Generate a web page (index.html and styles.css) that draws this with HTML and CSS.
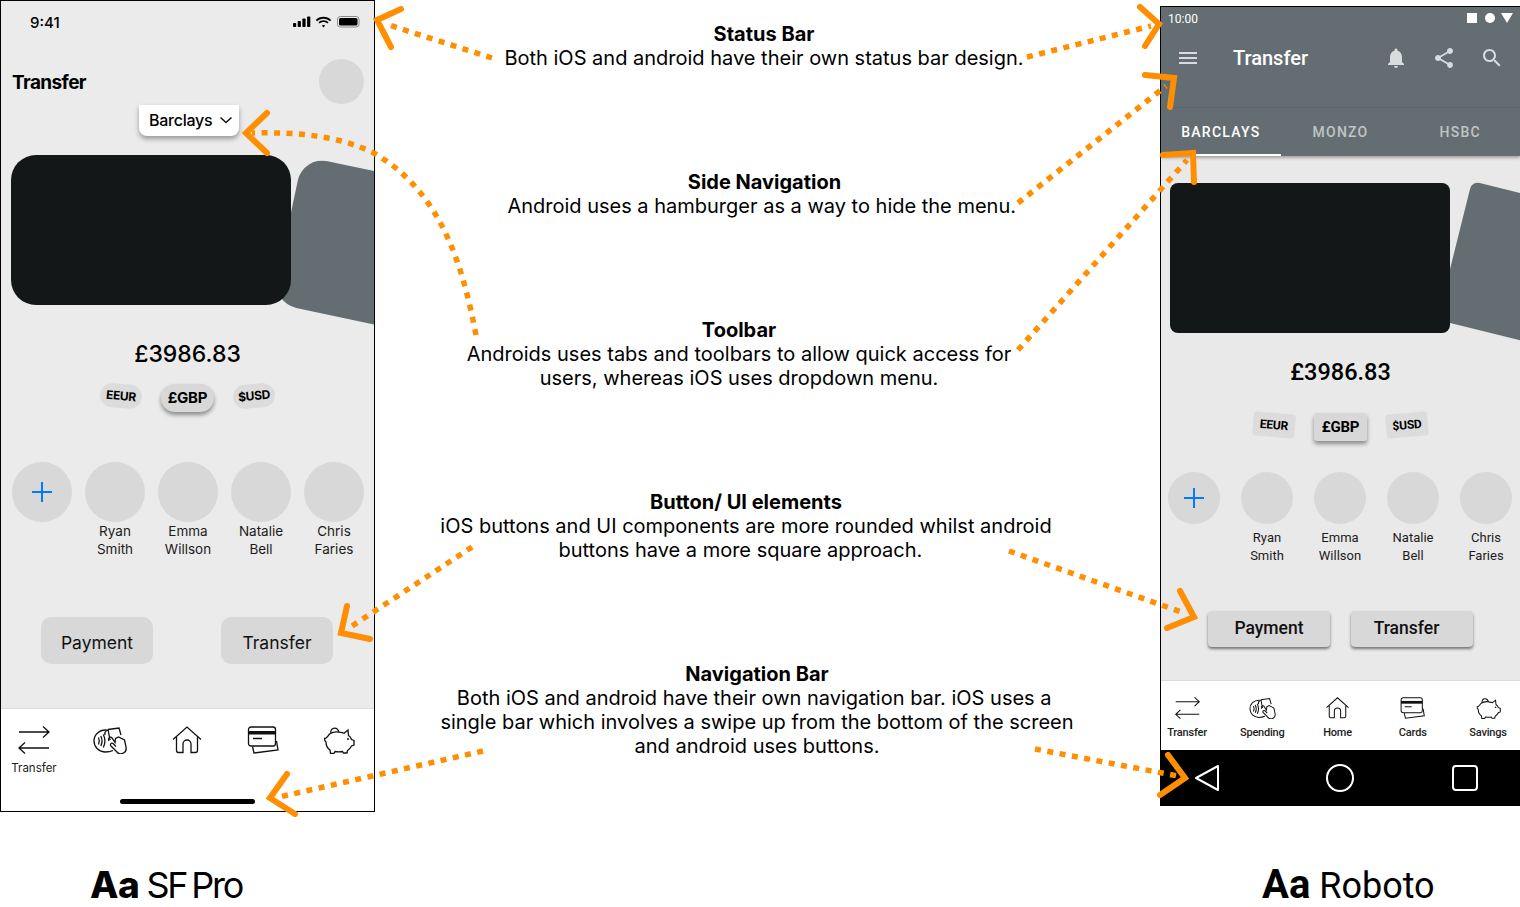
FILE: index.html
```html
<!DOCTYPE html>
<html>
  <head>
    <title>iOS vs Android</title>
    <link rel="stylesheet" href="styles.css">
  </head>
  <body>
    <!-- icons used by both tab bars -->
    <svg class="sprites" width="0" height="0">
      <symbol id="i-transfer" viewBox="0 0 34 28">
        <path d="M2 6H32M26 .5L32 6L26 11.5M32 22H2M8 16.5L2 22L8 27.5"/>
      </symbol>
      <symbol id="i-spending" viewBox="0 0 34 28">
        <path d="M20 24.500C17 25.800 14 26 12.500 26C6 26 1 21 1 15C1 9 6 4 12.500 4C13.500 4 14.500 4 15.500 4.300"/>
        <path d="M5.500 11.500c1 2.200 1 4.800 0 7M7.800 10c1.500 3 1.500 7 0 10M10.300 8.500c2 4 2 9 0 13"/>
        <path d="M15 3.500L26 2L28 9M15 3.500L17 14M13.500 5C12 5.500 11.500 7 12 9"/>
        <path d="M16 15c-1.500-3 1.500-5 3-3l3 4.500l.5-4l3-1.500l6 3l1.500 7c.5 2.500-.5 5-2.500 6c-3 1.500-5 1-6.500-1l-6-6c-1.500-2 .5-3.500 2-2.500l3 3"/>
      </symbol>
      <symbol id="i-home" viewBox="0 0 34 28">
        <path d="M3 13.500L17 1L31 13.500M6.500 11V24.500a2 2 0 0 0 2 2H13V18a4 4 0 0 1 8 0V26.500H25.500a2 2 0 0 0 2-2V11"/>
      </symbol>
      <symbol id="i-cards" viewBox="0 0 34 28">
        <rect x="2.500" y="1" width="27" height="19" rx="2.500"/>
        <path class="fill" d="M2.500 5H29.500V8.500H2.500z"/>
        <path d="M7 12.500H16M6.500 20.500L8 27L32 24L30.500 15"/>
      </symbol>
      <symbol id="i-piggy" viewBox="0 0 34 28">
        <path d="M7.500 8C10 6.500 14 5.500 17 6.200C19.500 6.500 21 7 22 7.200L26 4L26.500 9.500C28 10.500 29 12 29.500 13.500L32 14.500V19L29.500 20C28.500 22 27 23.500 25.500 24.500L25 27H21.500L20.500 25.500C18 26 15.500 26 13 25.500L12 27.500H8.500L8 24C5 22 4 19 4 16C3 15 2.500 14 2.500 12.500C4.500 12.500 6 10 7.500 8"/>
        <path d="M9 7C7.500 2.500 14.500-.5 17 6"/>
        <circle class="fill" cx="26" cy="13" r="1"/>
      </symbol>
    </svg>

    <div class="page">
      <section class="col-ios">
        <div class="phone ios">
          <div class="card-back"></div>
          <div class="ios-status">
            <span class="ios-time">9:41</span>
            <svg class="ios-status-icons" width="67" height="12" viewBox="0 0 67 12">
              <rect x="0" y="7" width="3.200" height="4" rx=".8"/>
              <rect x="4.700" y="5" width="3.200" height="6" rx=".8"/>
              <rect x="9.400" y="2.500" width="3.200" height="8.500" rx=".8"/>
              <rect x="14.100" y="0.500" width="3.200" height="10.500" rx=".8"/>
              <path d="M30.500 2.800c-2.500 0-4.800 1-6.400 2.500l-1.300-1.300c2-2 4.700-3.200 7.700-3.200s5.700 1.200 7.700 3.200l-1.300 1.300c-1.600-1.500-3.900-2.500-6.400-2.500zm0 3.300c-1.500 0-2.800.6-3.800 1.400l-1.300-1.300c1.400-1.200 3.100-2 5.100-2s3.700.8 5.100 2l-1.300 1.300c-1-.8-2.300-1.400-3.800-1.400zm0 2.900c.7 0 1.300.2 1.700.6l-1.700 1.900l-1.700-1.900c.4-.4 1-.6 1.700-.6z"/>
              <rect x="44.500" y=".5" width="21.500" height="10.500" rx="2.800" fill="none" stroke="#8a8a8a"/>
              <rect x="46" y="2" width="18.500" height="7.500" rx="1.500"/>
            </svg>
          </div>
          <div class="ios-header">
            <h2>Transfer</h2>
            <div class="ios-avatar"></div>
          </div>
          <div class="dropdown">
            <span>Barclays</span>
            <svg width="12" height="8" viewBox="0 0 12 8"><path d="M.5 1.500L6 6.500L11.500 1.500"/></svg>
          </div>
          <div class="card"></div>
          <div class="amount">£3986.83</div>
          <div class="chips">
            <span class="chip tilt-right">EEUR</span>
            <span class="chip active">£GBP</span>
            <span class="chip tilt-left">$USD</span>
          </div>
          <div class="people">
            <div class="person"><div class="face"><svg viewBox="0 0 20 20"><path d="M10 0V20M0 10H20"/></svg></div></div>
            <div class="person"><div class="face"></div>Ryan<br>Smith</div>
            <div class="person"><div class="face"></div>Emma<br>Willson</div>
            <div class="person"><div class="face"></div>Natalie<br>Bell</div>
            <div class="person"><div class="face"></div>Chris<br>Faries</div>
          </div>
          <div class="actions">
            <button>Payment</button>
            <button>Transfer</button>
          </div>
          <div class="tabs">
            <div class="tab"><svg class="icon"><use href="#i-transfer"/></svg>Transfer</div>
            <div class="tab"><svg class="icon"><use href="#i-spending"/></svg></div>
            <div class="tab"><svg class="icon"><use href="#i-home"/></svg></div>
            <div class="tab"><svg class="icon"><use href="#i-cards"/></svg></div>
            <div class="tab"><svg class="icon"><use href="#i-piggy"/></svg></div>
            <div class="home-bar"></div>
          </div>
        </div>
        <div class="caption caption-ios"><b>Aa</b> <span>SF Pro</span></div>
      </section>

      <section class="notes">
        <div class="note note-status">
          <b>Status Bar</b><br>
          Both iOS and android have their own status bar design.
        </div>
        <div class="note note-side">
          <b>Side Navigation</b><br>
          Android uses a hamburger as a way to hide the menu.&nbsp;
        </div>
        <div class="note note-toolbar">
          <b>Toolbar</b><br>
          Androids uses tabs and toolbars to allow quick access for<br>
          users, whereas iOS uses dropdown menu.
        </div>
        <div class="note note-button">
          <b>Button/ UI elements</b><br>
          iOS buttons and UI components are more rounded whilst android<br>
          buttons have a more square approach.&nbsp;&nbsp;
        </div>
        <div class="note note-nav">
          <b>Navigation Bar</b><br>
          Both iOS and android have their own navigation bar. iOS uses a&nbsp;<br>
          single bar which involves a swipe up from the bottom of the screen<br>
          and android uses buttons.
        </div>
      </section>

      <section class="col-android">
        <div class="phone android">
          <div class="card-back"></div>
          <div class="appbar">
            <div class="android-status">
              <span>10:00</span>
              <svg width="46" height="10" viewBox="0 0 46 10">
                <rect x="0" y="0" width="10" height="10"/>
                <circle cx="23" cy="5" r="5"/>
                <path d="M34 0H46L40 10z"/>
              </svg>
            </div>
            <div class="toolbar">
              <svg class="burger" width="18" height="12" viewBox="0 0 18 12"><path d="M0 1H18M0 6H18M0 11H18"/></svg>
              <h2>Transfer</h2>
              <svg class="tool" viewBox="0 0 24 24"><path d="M12 22c1.100 0 2-.9 2-2h-4c0 1.100.9 2 2 2zm6-6v-5c0-3.070-1.630-5.640-4.500-6.320V4c0-.83-.67-1.500-1.500-1.500s-1.500.67-1.500 1.500v.68C7.640 5.360 6 7.920 6 11v5l-2 2v1h16v-1l-2-2z"/></svg>
              <svg class="tool" viewBox="0 0 24 24"><path d="M18 16.080c-.76 0-1.440.3-1.960.77L8.910 12.700c.05-.23.09-.46.09-.7s-.04-.47-.09-.7l7.050-4.110c.54.5 1.250.81 2.040.81 1.660 0 3-1.340 3-3s-1.340-3-3-3-3 1.340-3 3c0 .24.04.47.09.7L8.040 9.810C7.500 9.310 6.790 9 6 9c-1.660 0-3 1.340-3 3s1.340 3 3 3c.79 0 1.500-.31 2.040-.81l7.120 4.160c-.05.21-.08.43-.08.65 0 1.610 1.310 2.920 2.920 2.920 1.610 0 2.920-1.310 2.920-2.920s-1.310-2.920-2.920-2.920z"/></svg>
              <svg class="tool" viewBox="0 0 24 24"><path d="M15.500 14h-.79l-.28-.27C15.410 12.590 16 11.110 16 9.500 16 5.910 13.090 3 9.500 3S3 5.910 3 9.500 5.910 16 9.500 16c1.610 0 3.090-.59 4.230-1.570l.27.28v.79l5 4.990L20.490 19l-4.990-5zm-6 0C7.010 14 5 11.990 5 9.500S7.010 5 9.500 5 14 7.010 14 9.500 11.990 14 9.500 14z"/></svg>
            </div>
            <div class="banks">
              <div class="bank selected">BARCLAYS</div>
              <div class="bank">MONZO</div>
              <div class="bank">HSBC</div>
            </div>
          </div>
          <div class="card"></div>
          <div class="amount">£3986.83</div>
          <div class="chips">
            <span class="chip tilt-right">EEUR</span>
            <span class="chip active">£GBP</span>
            <span class="chip tilt-left">$USD</span>
          </div>
          <div class="people">
            <div class="person"><div class="face"><svg viewBox="0 0 20 20"><path d="M10 0V20M0 10H20"/></svg></div></div>
            <div class="person"><div class="face"></div>Ryan<br>Smith</div>
            <div class="person"><div class="face"></div>Emma<br>Willson</div>
            <div class="person"><div class="face"></div>Natalie<br>Bell</div>
            <div class="person"><div class="face"></div>Chris<br>Faries</div>
          </div>
          <div class="actions">
            <button>Payment</button>
            <button class="off-center">Transfer</button>
          </div>
          <div class="tabs">
            <div class="tab"><svg class="icon"><use href="#i-transfer"/></svg>Transfer</div>
            <div class="tab"><svg class="icon"><use href="#i-spending"/></svg>Spending</div>
            <div class="tab"><svg class="icon"><use href="#i-home"/></svg>Home</div>
            <div class="tab"><svg class="icon"><use href="#i-cards"/></svg>Cards</div>
            <div class="tab"><svg class="icon"><use href="#i-piggy"/></svg>Savings</div>
          </div>
          <div class="softkeys">
            <svg width="26" height="28" viewBox="0 0 26 28"><path d="M24 2V26L2 14z"/></svg>
            <svg class="softkey-home" width="28" height="28" viewBox="0 0 28 28"><circle cx="14" cy="14" r="13"/></svg>
            <svg width="26" height="26" viewBox="0 0 26 26"><rect x="1" y="1" width="24" height="24" rx="3"/></svg>
          </div>
        </div>
        <div class="caption caption-android"><b>Aa</b> <span>Roboto</span></div>
      </section>

      <!-- orange arrows over everything -->
      <svg class="arrows" width="1520" height="907" viewBox="0 0 1520 907">
        <g class="dots">
          <path d="M492 58L386 24"/>
          <path d="M1027 57L1151 26"/>
          <path d="M1018 203L1166 86"/>
          <path d="M1018 350L1187 160"/>
          <path d="M476 335C462 262 440 190 372 152C335 135 295 132 252 133"/>
          <path d="M472 547L349 628"/>
          <path d="M1009 551L1184 613"/>
          <path d="M483 751L279 797"/>
          <path d="M1035 749L1178 776"/>
        </g>
        <g class="heads">
          <path d="M401 9L377 20L391 47"/>
          <path d="M1140 7L1159 24L1145 46"/>
          <path d="M1145 75L1174 78L1170 107"/>
          <path d="M1163 155L1193 153L1194 182"/>
          <path d="M267 113L246 133L267 153"/>
          <path d="M347 606L341 633L370 639"/>
          <path d="M1180 591L1194 617L1167 628"/>
          <path d="M287 774L270 798L295 814"/>
          <path d="M1168 755L1185 778L1160 795"/>
        </g>
      </svg>
    </div>
  </body>
</html>
```

FILE: styles.css
```css
* {
  box-sizing: border-box;
}

body {
  margin: 0;
  background: white;
  color: black;
  font-family: Inter, "Liberation Sans", sans-serif;
}

h2 {
  margin: 0;
}

.sprites {
  display: block;
  height: 0;
}

.page {
  position: relative;
  display: grid;
  grid-template-columns: 375px 785px 360px;
  width: 1520px;
  height: 907px;
  overflow: hidden;
}

/* shared phone parts */
.phone {
  position: relative;
  display: flex;
  flex-direction: column;
  overflow: hidden;
}

.card {
  position: relative;
  width: 280px;
  height: 150px;
  background-color: #131718;
}

.card-back {
  position: absolute;
  width: 280px;
  background-color: #646e72;
  transform-origin: top left;
}

.amount {
  position: relative;
  height: 30px;
  line-height: 30px;
  text-align: center;
}

.chips {
  display: flex;
  justify-content: center;
  align-items: flex-start;
  gap: 19px;
}

.chip {
  width: 42px;
  height: 24px;
  background-color: #dcdcdc;
  font-size: 12px;
  font-weight: 700;
  letter-spacing: -.3px;
  line-height: 24px;
  text-align: center;
}

.chip.active {
  width: 53px;
  height: 28px;
  background-color: #d8d8d8;
  font-size: 15px;
  letter-spacing: -.2px;
  line-height: 28px;
}

.tilt-right {
  transform: rotate(5deg);
}

.tilt-left {
  transform: rotate(-5deg);
}

.people {
  display: flex;
}

.person {
  text-align: center;
  line-height: 18px;
  color: #1c1c1c;
}

.face {
  display: flex;
  align-items: center;
  justify-content: center;
  border-radius: 50%;
  background-color: #d8d8d8;
}

.face svg {
  width: 20px;
  height: 20px;
  fill: none;
  stroke: #007aff;
  stroke-width: 2;
}

.actions {
  display: flex;
}

button {
  border: none;
  padding: 0;
  background-color: #d8d8d8;
  color: #111;
  font-size: 17.500px;
}

.tabs {
  position: relative;
  display: flex;
  justify-content: space-between;
  margin-top: auto;
  background-color: white;
  border-top: 1px solid #dcdcdc;
}

.tab {
  display: flex;
  flex-direction: column;
  align-items: center;
  color: #1c1c1c;
}

.icon {
  fill: none;
  stroke: #111;
  stroke-width: 1.300;
}

.icon .fill,
symbol .fill {
  fill: #111;
  stroke: none;
}

/* iOS */
.ios {
  width: 375px;
  height: 812px;
  border: 1px solid black;
  background-color: #ebebeb;
}

.ios .card-back {
  left: 302px;
  top: 155px;
  height: 150px;
  border-radius: 25px;
  transform: rotate(12deg);
}

.ios-status {
  display: flex;
  justify-content: space-between;
  align-items: center;
  height: 43px;
  padding: 0 14px 0 29px;
}

.ios-time {
  font-size: 15px;
  font-weight: 500;
}

.ios-status-icons {
  margin-top: -1px;
}

.ios-header {
  display: flex;
  justify-content: space-between;
  align-items: center;
  height: 45px;
  margin-top: 15px;
  padding: 1px 10px 0 11px;
}

.ios-header h2 {
  font-size: 19px;
  font-weight: 700;
  letter-spacing: -.6px;
}

.ios-avatar {
  width: 45px;
  height: 45px;
  margin-top: -1px;
  border-radius: 50%;
  background-color: #d8d8d8;
}

.dropdown {
  position: relative;
  z-index: 1;
  display: flex;
  justify-content: space-between;
  align-items: center;
  width: 100px;
  height: 31px;
  margin: 1px 0 0 138px;
  padding: 0 7px 2px 10px;
  background-color: white;
  border-radius: 0 0 8px 8px;
  box-shadow: 0 3px 5px rgba(0, 0, 0, .35);
  font-size: 16px;
  font-weight: 500;
  letter-spacing: -.25px;
}

.dropdown svg {
  fill: none;
  stroke: #111;
  stroke-width: 1.500;
}

.ios .card {
  margin: 19px 0 0 10px;
  border-radius: 25px;
}

.ios .amount {
  margin-top: 34px;
  font-size: 23px;
  font-weight: 500;
}

.ios .chips {
  margin-top: 15px;
}

.ios .chip {
  border-radius: 12px;
}

.ios .chip.active {
  border-radius: 14px;
  box-shadow: 0 3px 4px rgba(0, 0, 0, .4);
}

.ios .people {
  gap: 13px;
  margin-top: 50px;
  padding-left: 11px;
}

.ios .person {
  width: 60px;
  font-size: 13.500px;
}

.ios .face {
  height: 60px;
}

.ios .actions {
  justify-content: space-between;
  margin-top: 59px;
  padding: 0 41px 0 40px;
}

.ios button {
  width: 112px;
  height: 47px;
  padding-top: 3px;
  border-radius: 10px;
  font-family: Inter, sans-serif;
}

.ios .tabs {
  height: 103px;
  padding: 17px 5px 0 3px;
  font-size: 11.500px;
}

.ios .tab {
  width: 60px;
}

.ios .icon {
  width: 34px;
  height: 28px;
  margin-bottom: 7px;
}

.home-bar {
  position: absolute;
  left: 119px;
  bottom: 7px;
  width: 135px;
  height: 5px;
  border-radius: 3px;
  background-color: black;
}

/* android */
.col-android {
  padding-top: 6px;
  font-family: Roboto, sans-serif;
}

.android {
  width: 360px;
  height: 800px;
  border-left: 1px solid black;
  border-top: 1px solid black;
  background-color: #e9e9e9;
}

.android .card-back {
  left: 311px;
  top: 174px;
  height: 143px;
  border-radius: 8px;
  transform: rotate(14deg);
}

.appbar {
  position: relative;
  z-index: 1;
  height: 149px;
  background-color: #646e72;
  box-shadow: 0 2px 3px rgba(0, 0, 0, .3);
  color: white;
}

.android-status {
  display: flex;
  justify-content: space-between;
  align-items: center;
  height: 23px;
  padding: 0 7px;
  font-size: 12px;
}

.android-status svg {
  fill: white;
  margin-top: -2px;
}

.toolbar {
  display: flex;
  align-items: center;
  height: 56px;
}

.burger {
  margin-left: 18px;
  stroke: white;
  stroke-width: 1.600;
}

.toolbar h2 {
  flex: 1;
  margin-left: 36px;
  font-size: 20px;
  font-weight: 500;
}

.tool {
  width: 24px;
  height: 24px;
  margin-right: 24px;
  fill: #d8dcdc;
}

.tool:last-child {
  margin-right: 16px;
}

.banks {
  display: flex;
  height: 49px;
  margin-top: 21px;
  border-top: 1px solid #5f696d;
}

.bank {
  width: 120px;
  height: 48px;
  line-height: 48px;
  text-align: center;
  font-size: 14px;
  font-weight: 500;
  letter-spacing: 1.250px;
  color: rgba(255, 255, 255, .6);
}

.bank.selected {
  color: white;
  border-bottom: 2px solid white;
}

.android .card {
  margin: 27px 0 0 9px;
  border-radius: 8px;
}

.android .amount {
  margin-top: 24px;
  font-size: 23.500px;
  font-weight: 500;
}

.android .chips {
  margin-top: 26px;
}

.android .chip {
  border-radius: 3px;
  letter-spacing: -.2px;
}

.android .chip.active {
  box-shadow: 0 3px 4px rgba(0, 0, 0, .4);
}

.android .people {
  gap: 21px;
  margin-top: 31px;
  padding-left: 7px;
}

.android .person {
  width: 52px;
  font-size: 13px;
}

.android .face {
  height: 52px;
  margin-bottom: 5px;
}

.android .actions {
  gap: 21px;
  margin-top: 46px;
  padding-left: 47px;
}

.android button {
  width: 122px;
  height: 36px;
  padding-bottom: 3px;
  border-radius: 4px;
  box-shadow: 0 2px 3px rgba(0, 0, 0, .5);
  font-family: Roboto, sans-serif;
  font-weight: 500;
}

.android button.off-center {
  padding-right: 11px;
}

.android .tabs {
  height: 70px;
  padding: 16px 6px 0 0;
  font-size: 11px;
  font-weight: 500;
  letter-spacing: -.2px;
}

.android .tab {
  width: 52px;
}

.android .icon {
  width: 27px;
  height: 22px;
  margin-bottom: 7px;
}

.softkeys {
  display: flex;
  justify-content: space-between;
  align-items: center;
  height: 56px;
  padding: 0 42px 0 33px;
  background-color: black;
  fill: none;
  stroke: white;
  stroke-width: 2;
  stroke-linejoin: round;
}

.softkey-home {
  margin-left: 8px;
}

/* font captions */
.caption {
  height: 44px;
  font-size: 36px;
  line-height: 44px;
  white-space: nowrap;
}

.caption b {
  font-weight: 800;
}

.caption-ios {
  margin-top: 51px;
  padding-left: 90px;
  word-spacing: -3px;
}

.caption-ios b {
  font-size: 37px;
  letter-spacing: -.5px;
}

.caption-ios span {
  letter-spacing: -2.200px;
}

.caption-android {
  margin-top: 57px;
  padding-left: 102px;
}

.caption-android b {
  font-size: 40px;
  font-weight: 700;
}

/* middle text */
.notes {
  display: flex;
  flex-direction: column;
  gap: 100px;
  padding-top: 22px;
}

.note {
  text-align: center;
  font-size: 20px;
  line-height: 24px;
  white-space: nowrap;
}

.note b {
  font-weight: 700;
}

.note-status {
  padding-right: 7px;
}

.note-side {
  padding-right: 6px;
}

.note-toolbar {
  padding-right: 57px;
}

.note-button {
  padding-right: 43px;
}

.note-nav {
  padding-right: 21px;
}

.arrows {
  position: absolute;
  left: 0;
  top: 0;
  z-index: 2;
  fill: none;
  stroke: #ff8f00;
  pointer-events: none;
}

.dots {
  stroke-width: 5.500px;
  stroke-dasharray: 6 6.500;
}

.heads {
  stroke-width: 6px;
  stroke-linecap: round;
  stroke-linejoin: miter;
}
```
